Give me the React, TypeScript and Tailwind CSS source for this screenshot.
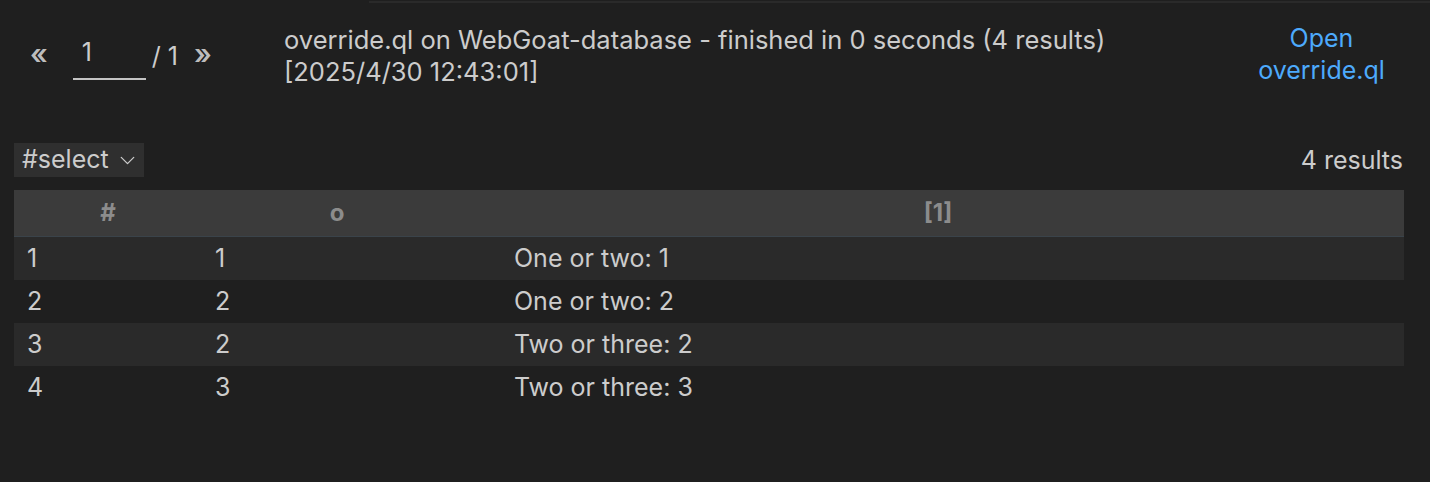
import { ChevronDown } from 'lucide-react';

const rows = [
  { n: 1, o: 1, v: 'One or two: 1' },
  { n: 2, o: 2, v: 'One or two: 2' },
  { n: 3, o: 2, v: 'Two or three: 2' },
  { n: 4, o: 3, v: 'Two or three: 3' },
];

export default function App() {
  return (
    <div
      className="w-[1430px] h-[482px] bg-[#1f1f1f] text-[#cccccc] overflow-hidden"
      style={{ fontFamily: 'Inter, "Noto Sans", sans-serif' }}
    >
      {/* faint edge of the tab strip above */}
      <div className="h-[3px] ml-[369px] border-b-2 border-[#2a2a2a]" />

      {/* header: pager, query info, open link */}
      <div className="flex items-start h-[122px]">
        <div className="flex items-start w-[284px] pl-[30px] pt-[36px] text-[25px]">
          <span className="text-[28px] leading-[28px] mt-[1px] text-[#bdbdbd] font-semibold mr-[25px]">«</span>
          <div className="w-[73px] border-b-2 border-[#c4c4c4] h-[41px] leading-[26px] pl-[9px]">1</div>
          <span className="ml-[6px] mt-[4px] leading-[26px]">/ 1</span>
          <span className="text-[28px] leading-[28px] mt-[1px] text-[#bdbdbd] font-semibold ml-[16px]">»</span>
        </div>
        <div className="flex-1 pt-[21px] text-[25.5px] leading-[32px]">
          <div>override.ql on WebGoat-database - finished in 0 seconds (4 results)</div>
          <div>[2025/4/30 12:43:01]</div>
        </div>
        <div className="w-[215px] pt-[19px] text-center text-[25px] leading-[32px] text-[#4daafc] pr-[2px]">
          <div>Open</div>
          <div>override.ql</div>
        </div>
      </div>

      {/* result set selector and count */}
      <div className="flex items-start justify-between pl-[14px] pr-[27px] pt-[18px] h-[65px]">
        <div className="flex items-center gap-[6px] bg-[#2f2f2f] h-[34px] w-[130px] pl-[8px] text-[25px]">
          <span>#select</span>
          <ChevronDown size={25} strokeWidth={1.2} className="mt-[1px]" />
        </div>
        <span className="text-[25px] leading-[34px]">4 results</span>
      </div>

      {/* results table */}
      <div className="mx-[14px] w-[1390px] text-[25px]">
        <div className="flex h-[47px] items-center bg-[#3b3b3b] border-b border-[#3a434a] text-[#8c8c8c] font-bold text-[24px]">
          <div className="w-[188px] text-center">#</div>
          <div className="w-[270px] text-center">o</div>
          <div className="flex-1 text-center">[1]</div>
        </div>
        {rows.map((r, i) => (
          <div
            key={r.n}
            className={`flex h-[43px] items-center ${i % 2 === 0 ? 'bg-[#2a2a2a]' : 'bg-[#1f1f1f]'}`}
          >
            <div className="w-[188px] pl-[13px]">{r.n}</div>
            <div className="w-[270px] pl-[13px]">{r.o}</div>
            <div className="flex-1 pl-[42px]">{r.v}</div>
          </div>
        ))}
      </div>
    </div>
  );
}
